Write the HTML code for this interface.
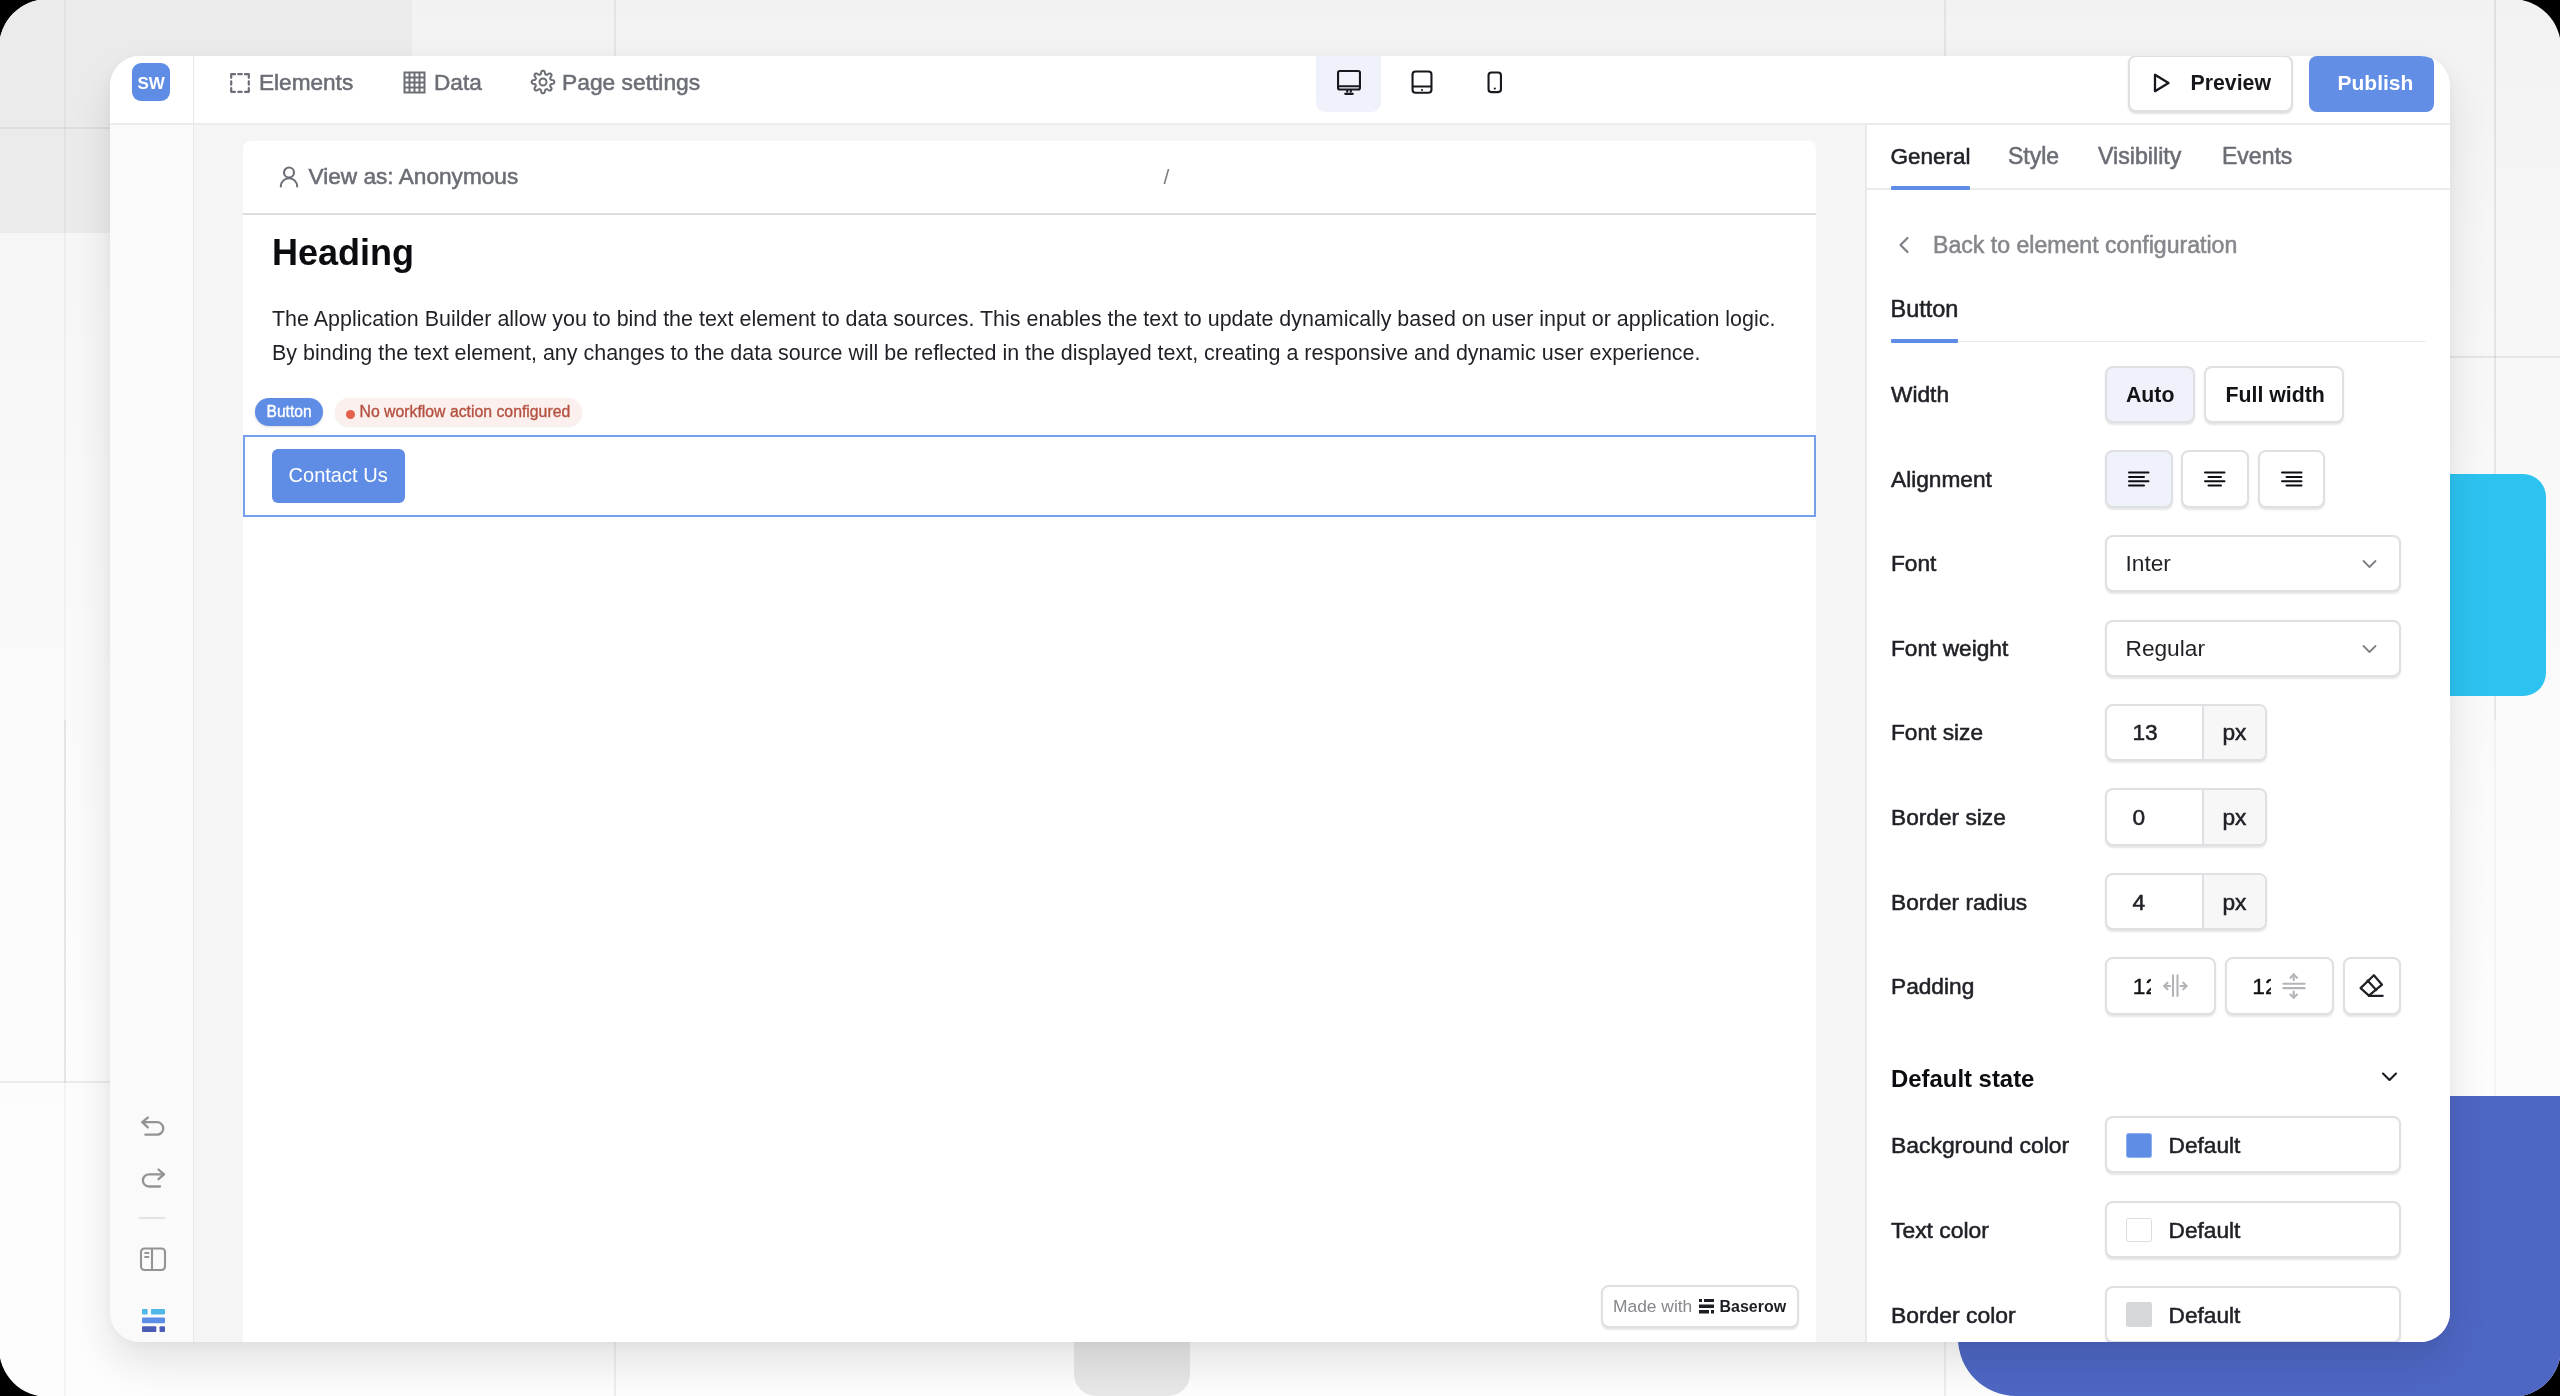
<!DOCTYPE html>
<html><head><meta charset="utf-8">
<style>
*{box-sizing:border-box;margin:0;padding:0}
html,body{width:2560px;height:1396px;overflow:hidden;background:#000}
body{font-family:"Liberation Sans",sans-serif;position:relative}
.a{position:absolute}
.t{position:absolute;white-space:nowrap;line-height:1;transform:translateZ(0)}
#frame{position:absolute;left:-1px;top:-1px;width:2562px;height:1398px;border-radius:49px;overflow:hidden;background:linear-gradient(180deg,#f2f2f2 0px,#f6f6f6 240px,#f9f9f9 530px,#fcfcfc 1000px,#fdfdfd 1396px)}
#inner{position:absolute;left:1px;top:1px;width:2560px;height:1396px}
#win{position:absolute;left:110px;top:56px;width:2340px;height:1286px;border-radius:30px;overflow:hidden;background:#fff;box-shadow:0 20px 40px rgba(0,0,0,0.11),0 2px 8px rgba(0,0,0,0.03)}
</style></head><body>
<div id="frame"><div id="inner">
<div class="a" style="left:0.00px;top:0.00px;width:412.00px;height:233.00px;background:#ebebeb"></div>
<div class="a" style="left:64.00px;top:0.00px;width:2.00px;height:1396.00px;background:rgba(0,0,0,0.035)"></div>
<div class="a" style="left:64.00px;top:720.00px;width:2.00px;height:362.00px;background:rgba(0,0,0,0.05)"></div>
<div class="a" style="left:614.00px;top:0.00px;width:2.00px;height:1396.00px;background:rgba(0,0,0,0.06)"></div>
<div class="a" style="left:1944.00px;top:0.00px;width:2.00px;height:1396.00px;background:rgba(0,0,0,0.06)"></div>
<div class="a" style="left:2494.00px;top:0.00px;width:2.00px;height:720.00px;background:rgba(0,0,0,0.07)"></div>
<div class="a" style="left:2494.00px;top:720.00px;width:2.00px;height:676.00px;background:rgba(0,0,0,0.03)"></div>
<div class="a" style="left:0.00px;top:127.00px;width:120.00px;height:2.00px;background:rgba(0,0,0,0.06)"></div>
<div class="a" style="left:0.00px;top:1081.00px;width:120.00px;height:2.00px;background:rgba(0,0,0,0.07)"></div>
<div class="a" style="left:2440.00px;top:356.00px;width:120.00px;height:2.00px;background:rgba(0,0,0,0.07)"></div>
<div class="a" style="left:2300.00px;top:474.00px;width:246.00px;height:222.00px;border-radius:0 23px 23px 0;background:#2dc3f1"></div>
<div class="a" style="left:1958.00px;top:1096.00px;width:702.00px;height:300.00px;border-radius:0 0 0 58px;background:#4e67c4"></div>
<div class="a" style="left:1074.00px;top:1200.00px;width:116.00px;height:196.00px;border-radius:0 0 22px 22px;background:#e7e7e7"></div>
<div id="win">
<div class="a" style="left:0.00px;top:0.00px;width:2340.00px;height:67.00px;background:#fff"></div>
<div class="a" style="left:0.00px;top:67.00px;width:2340.00px;height:2.00px;background:#ececec"></div>
<div class="a" style="left:83.00px;top:0.00px;width:1.00px;height:1286.00px;background:#e8e8e8"></div>
<div class="a" style="left:0.00px;top:69.00px;width:83.00px;height:1217.00px;background:#fafafa"></div>
<div class="a" style="left:84.00px;top:69.00px;width:1671.00px;height:1217.00px;background:#f5f5f5"></div>
<div class="a" style="left:1755.00px;top:69.00px;width:2.00px;height:1217.00px;background:#e9e9e9"></div>
<div class="a" style="left:1757.00px;top:69.00px;width:583.00px;height:1217.00px;background:#fff"></div>
<div class="a" style="left:22.00px;top:7.00px;width:38.00px;height:38.00px;border-radius:9px;background:#5f8de5"></div>
<div class="t" style="left:27.50px;top:19.30px;font-size:17px;color:#fff;font-weight:700;">SW</div>
<svg class="a" style="left:119.00px;top:16.00px;" width="22" height="22" viewBox="0 0 22 22" fill="none"><g stroke="#6b6e75" stroke-width="2.2" stroke-linecap="round" stroke-linejoin="round"><path d="M2.2 5.8V2.2h3.8M9.3 2.2h3.4M16 2.2h3.8v3.6M19.8 9.3v3.4M19.8 16.2v3.6H16M12.7 19.8H9.3M6 19.8H2.2v-3.6M2.2 12.7V9.3"/></g></svg>
<div class="t" style="left:149.00px;top:15.50px;font-size:22.6px;color:#6b6e75;font-weight:400;-webkit-text-stroke:0.55px #6b6e75;">Elements</div>
<svg class="a" style="left:293.00px;top:15.00px;" width="23" height="23" viewBox="0 0 23 23" fill="none"><g stroke="#6b6e75" stroke-width="2"><rect x="1.5" y="1.5" width="20" height="20"/><path d="M6.5 1.5v20M11.5 1.5v20M16.5 1.5v20M1.5 6.5h20M1.5 11.5h20M1.5 16.5h20"/></g></svg>
<div class="t" style="left:324.00px;top:15.50px;font-size:22.6px;color:#6b6e75;font-weight:400;-webkit-text-stroke:0.55px #6b6e75;">Data</div>
<svg class="a" style="left:420.30px;top:13.40px;" width="26" height="26" viewBox="0 0 26 26" fill="none"><g stroke="#6b6e75" stroke-width="2" stroke-linejoin="round"><path d="M13.00 1.65 L13.37 1.69 L13.73 1.81 L14.08 2.01 L14.41 2.30 L14.70 2.71 L14.87 3.58 L14.99 4.46 L15.18 4.88 L15.37 5.20 L15.57 5.44 L15.78 5.62 L16.00 5.75 L16.25 5.82 L16.53 5.84 L16.84 5.81 L17.20 5.72 L17.63 5.55 L18.33 5.02 L19.08 4.52 L19.57 4.44 L20.01 4.46 L20.40 4.57 L20.74 4.74 L21.03 4.97 L21.26 5.26 L21.43 5.60 L21.54 5.99 L21.56 6.43 L21.48 6.92 L20.98 7.67 L20.45 8.37 L20.28 8.80 L20.19 9.16 L20.16 9.47 L20.18 9.75 L20.25 10.00 L20.38 10.22 L20.56 10.43 L20.80 10.63 L21.12 10.82 L21.54 11.01 L22.42 11.13 L23.29 11.30 L23.70 11.59 L23.99 11.92 L24.19 12.27 L24.31 12.63 L24.35 13.00 L24.31 13.37 L24.19 13.73 L23.99 14.08 L23.70 14.41 L23.29 14.70 L22.42 14.87 L21.54 14.99 L21.12 15.18 L20.80 15.37 L20.56 15.57 L20.38 15.78 L20.25 16.00 L20.18 16.25 L20.16 16.53 L20.19 16.84 L20.28 17.20 L20.45 17.63 L20.98 18.33 L21.48 19.08 L21.56 19.57 L21.54 20.01 L21.43 20.40 L21.26 20.74 L21.03 21.03 L20.74 21.26 L20.40 21.43 L20.01 21.54 L19.57 21.56 L19.08 21.48 L18.33 20.98 L17.63 20.45 L17.20 20.28 L16.84 20.19 L16.53 20.16 L16.25 20.18 L16.00 20.25 L15.78 20.38 L15.57 20.56 L15.37 20.80 L15.18 21.12 L14.99 21.54 L14.87 22.42 L14.70 23.29 L14.41 23.70 L14.08 23.99 L13.73 24.19 L13.37 24.31 L13.00 24.35 L12.63 24.31 L12.27 24.19 L11.92 23.99 L11.59 23.70 L11.30 23.29 L11.13 22.42 L11.01 21.54 L10.82 21.12 L10.63 20.80 L10.43 20.56 L10.22 20.38 L10.00 20.25 L9.75 20.18 L9.47 20.16 L9.16 20.19 L8.80 20.28 L8.37 20.45 L7.67 20.98 L6.92 21.48 L6.43 21.56 L5.99 21.54 L5.60 21.43 L5.26 21.26 L4.97 21.03 L4.74 20.74 L4.57 20.40 L4.46 20.01 L4.44 19.57 L4.52 19.08 L5.02 18.33 L5.55 17.63 L5.72 17.20 L5.81 16.84 L5.84 16.53 L5.82 16.25 L5.75 16.00 L5.62 15.78 L5.44 15.57 L5.20 15.37 L4.88 15.18 L4.46 14.99 L3.58 14.87 L2.71 14.70 L2.30 14.41 L2.01 14.08 L1.81 13.73 L1.69 13.37 L1.65 13.00 L1.69 12.63 L1.81 12.27 L2.01 11.92 L2.30 11.59 L2.71 11.30 L3.58 11.13 L4.46 11.01 L4.88 10.82 L5.20 10.63 L5.44 10.43 L5.62 10.22 L5.75 10.00 L5.82 9.75 L5.84 9.47 L5.81 9.16 L5.72 8.80 L5.55 8.37 L5.02 7.67 L4.52 6.92 L4.44 6.43 L4.46 5.99 L4.57 5.60 L4.74 5.26 L4.97 4.97 L5.26 4.74 L5.60 4.57 L5.99 4.46 L6.43 4.44 L6.92 4.52 L7.67 5.02 L8.37 5.55 L8.80 5.72 L9.16 5.81 L9.47 5.84 L9.75 5.82 L10.00 5.75 L10.22 5.62 L10.43 5.44 L10.63 5.20 L10.82 4.88 L11.01 4.46 L11.13 3.58 L11.30 2.71 L11.59 2.30 L11.92 2.01 L12.27 1.81 L12.63 1.69Z"/><circle cx="13" cy="13" r="3.5"/></g></svg>
<div class="t" style="left:452.00px;top:14.90px;font-size:22.8px;color:#6b6e75;font-weight:400;-webkit-text-stroke:0.55px #6b6e75;">Page settings</div>
<div class="a" style="left:1206.00px;top:-8.00px;width:65.00px;height:64.00px;border-radius:9px;background:#eff2fa"></div>
<svg class="a" style="left:1227.00px;top:14.00px;" width="24" height="26" viewBox="0 0 24 26" fill="none"><g stroke="#16181d" stroke-width="2.1" stroke-linejoin="round"><rect x="1.05" y="1.05" width="21.9" height="18.4" rx="1.8"/><path d="M1.5 16.2h21"/><path d="M10.2 19.5v3M13.8 19.5v3"/><path d="M8.3 23.8h7.4" stroke-width="2.3" stroke-linecap="round"/></g></svg>
<svg class="a" style="left:1301.00px;top:14.00px;" width="22" height="25" viewBox="0 0 22 25" fill="none"><g stroke="#16181d" stroke-width="2.1"><rect x="1.55" y="1.55" width="18.9" height="21.2" rx="3"/><path d="M1.6 16.5h18.8"/></g><circle cx="11" cy="20" r="1.05" fill="#16181d"/></svg>
<svg class="a" style="left:1377.00px;top:15.00px;" width="16" height="23" viewBox="0 0 16 23" fill="none"><g stroke="#16181d" stroke-width="2.1"><rect x="1.55" y="1.55" width="12.4" height="19.6" rx="2.8"/></g><circle cx="7.8" cy="17.6" r="1.05" fill="#16181d"/></svg>
<div class="a" style="left:2018.00px;top:-1.00px;width:165.00px;height:57.00px;border-radius:8px;background:#fff;border:2px solid #dfe0e3;box-shadow:0 1.5px 2px rgba(0,0,0,0.12)"></div>
<svg class="a" style="left:2041.00px;top:16.00px;" width="22" height="22" viewBox="0 0 22 22" fill="none"><path d="M4 2.8v16.4L17.5 11z" stroke="#16181d" stroke-width="2.3" stroke-linejoin="round"/></svg>
<div class="t" style="left:2080.50px;top:16.65px;font-size:21.3px;color:#16181d;font-weight:700;">Preview</div>
<div class="a" style="left:2199.00px;top:0.00px;width:125.00px;height:56.00px;border-radius:8px;background:#628ee5"></div>
<div class="t" style="left:2227.50px;top:16.30px;font-size:21px;color:#fff;font-weight:700;">Publish</div>
<div class="a" style="left:133.00px;top:85.00px;width:1573.00px;height:1259.00px;background:#fff;border-radius:7px 7px 0 0"></div>
<div class="a" style="left:133.00px;top:156.50px;width:1573.00px;height:2.00px;background:#dcdddf"></div>
<svg class="a" style="left:169.00px;top:110.00px;" width="20" height="22" viewBox="0 0 20 22" fill="none"><g stroke="#6b6e75" stroke-width="2.1" stroke-linecap="round"><circle cx="10" cy="6.5" r="5"/><path d="M1.8 20.5c0-4.6 3.7-8.3 8.2-8.3s8.2 3.7 8.2 8.3"/></g></svg>
<div class="t" style="left:198.50px;top:109.48px;font-size:22.65px;color:#6b6e75;font-weight:400;-webkit-text-stroke:0.55px #6b6e75;">View as: Anonymous</div>
<div class="t" style="left:1053.50px;top:110.30px;font-size:21px;color:#7a7c80;font-weight:400;">/</div>
<div class="t" style="left:162.00px;top:178.80px;font-size:36.0px;color:#0b0c10;font-weight:700;">Heading</div>
<div class="t" style="left:162.00px;top:252.57px;font-size:21.46px;color:#1f2127;font-weight:400;">The Application Builder allow you to bind the text element to data sources. This enables the text to update dynamically based on user input or application logic.</div>
<div class="t" style="left:162.00px;top:286.56px;font-size:21.47px;color:#1f2127;font-weight:400;">By binding the text element, any changes to the data source will be reflected in the displayed text, creating a responsive and dynamic user experience.</div>
<div class="a" style="left:145.00px;top:342.00px;width:68.00px;height:28.00px;border-radius:14px;background:#5f8de5;box-shadow:0 1px 3px rgba(0,0,0,0.15)"></div>
<div class="t" style="left:156.50px;top:348.00px;font-size:15.6px;color:#fff;font-weight:400;-webkit-text-stroke:0.35px #fff;">Button</div>
<div class="a" style="left:225.00px;top:342.00px;width:246.50px;height:28.00px;border-radius:14px;background:#fcf0ee;box-shadow:0 1px 2px rgba(0,0,0,0.08)"></div>
<div class="a" style="left:236.00px;top:353.50px;width:9.00px;height:9.00px;border-radius:50%;background:#e5604b"></div>
<div class="t" style="left:249.50px;top:347.90px;font-size:15.8px;color:#b3503f;font-weight:400;-webkit-text-stroke:0.35px #b3503f;">No workflow action configured</div>
<div class="a" style="left:133.00px;top:379.00px;width:1573.00px;height:82.00px;border:2px solid #779ee9"></div>
<div class="a" style="left:162.00px;top:393.00px;width:133.00px;height:53.50px;border-radius:6px;background:#5f8de5"></div>
<div class="t" style="left:178.50px;top:409.27px;font-size:20.06px;color:#fff;font-weight:400;">Contact Us</div>
<div class="a" style="left:1491.00px;top:1229.00px;width:198.00px;height:43.00px;border-radius:8px;border:2px solid #dfe0e3;background:#fff;box-shadow:0 1.5px 2px rgba(0,0,0,0.10)"></div>
<div class="t" style="left:1503.00px;top:1241.60px;font-size:17.4px;color:#85878b;font-weight:400;">Made with</div>
<svg class="a" style="left:1589.00px;top:1243.00px;" width="15" height="15" viewBox="0 0 15 15" fill="none"><g fill="#1d1f25"><rect x="0" y="0" width="3" height="3"/><rect x="5" y="0" width="10" height="3"/><rect x="0" y="5.5" width="15" height="3.5"/><rect x="0" y="11" width="10" height="3.5"/><rect x="12" y="11" width="3" height="3.5"/></g></svg>
<div class="t" style="left:1609.50px;top:1242.81px;font-size:15.98px;color:#1d1f25;font-weight:700;">Baserow</div>
<svg class="a" style="left:30.00px;top:1058.00px;" width="26" height="24" viewBox="0 0 26 24" fill="none"><g stroke="#939394" stroke-width="2.3" stroke-linecap="round" stroke-linejoin="round" fill="none"><path d="M7.8 3.6L2.3 8.2l5.5 5.2"/><path d="M2.6 8.2H17a6.25 6.25 0 0 1 0 12.5H5.4"/></g></svg>
<svg class="a" style="left:30.00px;top:1110.00px;" width="26" height="24" viewBox="0 0 26 24" fill="none"><g stroke="#939394" stroke-width="2.3" stroke-linecap="round" stroke-linejoin="round" fill="none"><path d="M18.5 3.5L24 8.3l-5.5 4.9"/><path d="M23.7 8.3H9a6.1 6.1 0 0 0 0 12.2H20"/></g></svg>
<div class="a" style="left:28.50px;top:1161.00px;width:26.00px;height:1.50px;background:#e3e3e3"></div>
<svg class="a" style="left:29.00px;top:1191.00px;" width="28" height="25" viewBox="0 0 28 25" fill="none"><g stroke="#939394" stroke-width="2.1" fill="none"><rect x="2" y="1.5" width="24" height="21.5" rx="3.5"/><path d="M13 1.5v21.5"/><path d="M6.2 6h3.2M6.2 10h3.2" stroke-linecap="round"/></g></svg>
<svg class="a" style="left:31.50px;top:1253.00px;" width="23" height="23" viewBox="0 0 23 23" fill="none"><rect x="0" y="0" width="5.6" height="5.6" rx="1" fill="#4fb8e8"/><rect x="9" y="0" width="14" height="5.6" rx="1" fill="#4fb8e8"/><rect x="0" y="8.6" width="23" height="5.6" rx="1" fill="#5b8ee6"/><rect x="0" y="17.2" width="14.3" height="5.8" rx="1" fill="#4a5cb5"/><rect x="17.5" y="17.2" width="5.5" height="5.8" rx="1" fill="#4a5cb5"/></svg>
<div class="t" style="left:1780.50px;top:89.57px;font-size:22.46px;color:#1f2127;font-weight:400;-webkit-text-stroke:0.55px #1f2127;">General</div>
<div class="t" style="left:1898.00px;top:88.80px;font-size:23.0px;color:#6b6e75;font-weight:400;-webkit-text-stroke:0.55px #6b6e75;">Style</div>
<div class="t" style="left:1988.00px;top:88.70px;font-size:23.2px;color:#6b6e75;font-weight:400;-webkit-text-stroke:0.55px #6b6e75;">Visibility</div>
<div class="t" style="left:2112.00px;top:88.80px;font-size:23.0px;color:#6b6e75;font-weight:400;-webkit-text-stroke:0.55px #6b6e75;">Events</div>
<div class="a" style="left:1757.00px;top:132.00px;width:583.00px;height:1.50px;background:#ebebeb"></div>
<div class="a" style="left:1781.00px;top:130.20px;width:79.00px;height:3.60px;background:#5f8de5;border-radius:1px"></div>
<svg class="a" style="left:1786.00px;top:180.00px;" width="16" height="18" viewBox="0 0 16 18" fill="none"><path d="M11.5 2L4.5 9l7 7" stroke="#7e8085" stroke-width="2.2" stroke-linecap="round" stroke-linejoin="round"/></svg>
<div class="t" style="left:1823.00px;top:177.75px;font-size:23.1px;color:#85878c;font-weight:400;-webkit-text-stroke:0.55px #85878c;">Back to element configuration</div>
<div class="t" style="left:1780.50px;top:241.55px;font-size:23.5px;color:#1f2127;font-weight:400;-webkit-text-stroke:0.55px #1f2127;">Button</div>
<div class="a" style="left:1781.00px;top:284.50px;width:535.00px;height:1.50px;background:#ebebeb"></div>
<div class="a" style="left:1781.00px;top:283.00px;width:67.00px;height:3.50px;background:#5f8de5;border-radius:1px"></div>
<div class="t" style="left:1781.00px;top:326.95px;font-size:22.7px;color:#1f2127;font-weight:400;-webkit-text-stroke:0.55px #1f2127;">Width</div>
<div class="t" style="left:1781.00px;top:411.95px;font-size:22.7px;color:#1f2127;font-weight:400;-webkit-text-stroke:0.55px #1f2127;">Alignment</div>
<div class="t" style="left:1781.00px;top:495.95px;font-size:22.7px;color:#1f2127;font-weight:400;-webkit-text-stroke:0.55px #1f2127;">Font</div>
<div class="t" style="left:1781.00px;top:580.95px;font-size:22.7px;color:#1f2127;font-weight:400;-webkit-text-stroke:0.55px #1f2127;">Font weight</div>
<div class="t" style="left:1781.00px;top:664.95px;font-size:22.7px;color:#1f2127;font-weight:400;-webkit-text-stroke:0.55px #1f2127;">Font size</div>
<div class="t" style="left:1781.00px;top:749.95px;font-size:22.7px;color:#1f2127;font-weight:400;-webkit-text-stroke:0.55px #1f2127;">Border size</div>
<div class="t" style="left:1781.00px;top:834.95px;font-size:22.7px;color:#1f2127;font-weight:400;-webkit-text-stroke:0.55px #1f2127;">Border radius</div>
<div class="t" style="left:1781.00px;top:918.95px;font-size:22.7px;color:#1f2127;font-weight:400;-webkit-text-stroke:0.55px #1f2127;">Padding</div>
<div class="a" style="left:1995.00px;top:310.00px;width:90.00px;height:57.00px;border-radius:8px;border:2px solid #dfe0e3;box-shadow:0 1.5px 2px rgba(0,0,0,0.10);background:#eff2fa"></div>
<div class="t" style="left:2016.00px;top:328.68px;font-size:21.25px;color:#111317;font-weight:700;">Auto</div>
<div class="a" style="left:2094.00px;top:310.00px;width:140.00px;height:57.00px;border-radius:8px;border:2px solid #dfe0e3;box-shadow:0 1.5px 2px rgba(0,0,0,0.10);background:#fff"></div>
<div class="t" style="left:2115.50px;top:328.65px;font-size:21.3px;color:#111317;font-weight:700;">Full width</div>
<div class="a" style="left:1995.00px;top:394.00px;width:68.00px;height:58.00px;border-radius:8px;border:2px solid #dfe0e3;box-shadow:0 1.5px 2px rgba(0,0,0,0.10);background:#eff2fa"></div>
<div class="a" style="left:2071.00px;top:394.00px;width:68.00px;height:58.00px;border-radius:8px;border:2px solid #dfe0e3;box-shadow:0 1.5px 2px rgba(0,0,0,0.10);background:#fff"></div>
<div class="a" style="left:2148.00px;top:394.00px;width:67.00px;height:58.00px;border-radius:8px;border:2px solid #dfe0e3;box-shadow:0 1.5px 2px rgba(0,0,0,0.10);background:#fff"></div>
<svg class="a" style="left:2018.00px;top:412.00px;" width="22" height="22" viewBox="0 0 22 22" fill="none"><rect x="0.00" y="3.50" width="21.5" height="2" rx="1" fill="#0d0f14"/><rect x="0.00" y="7.90" width="17" height="2" rx="1" fill="#0d0f14"/><rect x="0.00" y="12.20" width="21.5" height="2" rx="1" fill="#0d0f14"/><rect x="0.00" y="16.60" width="17" height="2" rx="1" fill="#0d0f14"/></svg>
<svg class="a" style="left:2094.40px;top:412.00px;" width="22" height="22" viewBox="0 0 22 22" fill="none"><rect x="0.00" y="3.50" width="21.5" height="2" rx="1" fill="#0d0f14"/><rect x="3.50" y="7.90" width="14.5" height="2" rx="1" fill="#0d0f14"/><rect x="0.00" y="12.20" width="21.5" height="2" rx="1" fill="#0d0f14"/><rect x="3.50" y="16.60" width="14.5" height="2" rx="1" fill="#0d0f14"/></svg>
<svg class="a" style="left:2170.80px;top:412.00px;" width="22" height="22" viewBox="0 0 22 22" fill="none"><rect x="0.00" y="3.50" width="21.5" height="2" rx="1" fill="#0d0f14"/><rect x="4.50" y="7.90" width="17" height="2" rx="1" fill="#0d0f14"/><rect x="0.00" y="12.20" width="21.5" height="2" rx="1" fill="#0d0f14"/><rect x="4.50" y="16.60" width="17" height="2" rx="1" fill="#0d0f14"/></svg>
<div class="a" style="left:1995.00px;top:479.00px;width:296.00px;height:57.00px;border-radius:8px;border:2px solid #dfe0e3;box-shadow:0 1.5px 2px rgba(0,0,0,0.10);background:#fff"></div>
<div class="t" style="left:2015.50px;top:495.95px;font-size:22.7px;color:#1f2127;font-weight:400;">Inter</div>
<svg class="a" style="left:2252.00px;top:502.50px;" width="15" height="10" viewBox="0 0 15 10" fill="none"><path d="M1.5 2l6 6 6-6" stroke="#7e8085" stroke-width="1.8" stroke-linecap="round" stroke-linejoin="round"/></svg>
<div class="a" style="left:1995.00px;top:564.00px;width:296.00px;height:57.00px;border-radius:8px;border:2px solid #dfe0e3;box-shadow:0 1.5px 2px rgba(0,0,0,0.10);background:#fff"></div>
<div class="t" style="left:2015.50px;top:580.95px;font-size:22.7px;color:#1f2127;font-weight:400;">Regular</div>
<svg class="a" style="left:2252.00px;top:587.50px;" width="15" height="10" viewBox="0 0 15 10" fill="none"><path d="M1.5 2l6 6 6-6" stroke="#7e8085" stroke-width="1.8" stroke-linecap="round" stroke-linejoin="round"/></svg>
<div class="a" style="left:1995.00px;top:648.00px;width:162.00px;height:57.00px;border-radius:8px;border:2px solid #dfe0e3;box-shadow:0 1.5px 2px rgba(0,0,0,0.10);background:#fff;overflow:hidden"><div class="a" style="left:95px;top:0;width:70px;height:100%;background:#f7f7f7;border-left:2px solid #dfe0e3"></div></div>
<div class="t" style="left:2022.50px;top:664.95px;font-size:22.7px;color:#1f2127;font-weight:400;-webkit-text-stroke:0.55px #1f2127;">13</div>
<div class="t" style="left:2112.50px;top:664.95px;font-size:22.7px;color:#1f2127;font-weight:400;-webkit-text-stroke:0.55px #1f2127;">px</div>
<div class="a" style="left:1995.00px;top:732.00px;width:162.00px;height:58.00px;border-radius:8px;border:2px solid #dfe0e3;box-shadow:0 1.5px 2px rgba(0,0,0,0.10);background:#fff;overflow:hidden"><div class="a" style="left:95px;top:0;width:70px;height:100%;background:#f7f7f7;border-left:2px solid #dfe0e3"></div></div>
<div class="t" style="left:2022.50px;top:749.95px;font-size:22.7px;color:#1f2127;font-weight:400;-webkit-text-stroke:0.55px #1f2127;">0</div>
<div class="t" style="left:2112.50px;top:749.95px;font-size:22.7px;color:#1f2127;font-weight:400;-webkit-text-stroke:0.55px #1f2127;">px</div>
<div class="a" style="left:1995.00px;top:817.00px;width:162.00px;height:57.00px;border-radius:8px;border:2px solid #dfe0e3;box-shadow:0 1.5px 2px rgba(0,0,0,0.10);background:#fff;overflow:hidden"><div class="a" style="left:95px;top:0;width:70px;height:100%;background:#f7f7f7;border-left:2px solid #dfe0e3"></div></div>
<div class="t" style="left:2022.50px;top:834.95px;font-size:22.7px;color:#1f2127;font-weight:400;-webkit-text-stroke:0.55px #1f2127;">4</div>
<div class="t" style="left:2112.50px;top:834.95px;font-size:22.7px;color:#1f2127;font-weight:400;-webkit-text-stroke:0.55px #1f2127;">px</div>
<div class="a" style="left:1995.00px;top:901.00px;width:111.00px;height:58.00px;border-radius:8px;border:2px solid #dfe0e3;box-shadow:0 1.5px 2px rgba(0,0,0,0.10);background:#fff"></div>
<div class="a" style="left:2115.00px;top:901.00px;width:109.00px;height:58.00px;border-radius:8px;border:2px solid #dfe0e3;box-shadow:0 1.5px 2px rgba(0,0,0,0.10);background:#fff"></div>
<div class="a" style="left:2233.00px;top:901.00px;width:58.00px;height:58.00px;border-radius:8px;border:2px solid #dfe0e3;box-shadow:0 1.5px 2px rgba(0,0,0,0.10);background:#fff"></div>
<div class="t" style="left:2022.80px;top:918.95px;width:18.6px;overflow:hidden;font-size:22.7px;color:#111317;-webkit-text-stroke:0.4px #111317">12</div>
<div class="t" style="left:2142.30px;top:918.95px;width:18.6px;overflow:hidden;font-size:22.7px;color:#111317;-webkit-text-stroke:0.4px #111317">12</div>
<svg class="a" style="left:2051.00px;top:917.00px;" width="28" height="26" viewBox="0 0 28 26" fill="none"><g stroke="#b3b4b8" stroke-width="2.1" stroke-linecap="round" stroke-linejoin="round"><path d="M12 2.4v20.6M16.5 2.4v20.6"/><path d="M3.2 13h5.8M19.5 13h6"/><path d="M6.5 9.7L3.2 13l3.3 3.3M22.3 9.7l3.3 3.3-3.3 3.3"/></g></svg>
<svg class="a" style="left:2171.00px;top:916.00px;" width="26" height="28" viewBox="0 0 26 28" fill="none"><g stroke="#b3b4b8" stroke-width="2.1" stroke-linecap="round" stroke-linejoin="round"><path d="M2.4 11.7h21.2M2.4 16.1h21.2"/><path d="M12.7 2.4v5.8M12.7 19.5v6"/><path d="M9.4 5.7l3.3-3.3 3.3 3.3M9.4 22.5l3.3 3.3 3.3-3.3"/></g></svg>
<svg class="a" style="left:2248.00px;top:916.00px;" width="28" height="28" viewBox="0 0 28 28" fill="none"><g stroke="#1d1f25" stroke-width="2.2" stroke-linejoin="round" stroke-linecap="round"><path d="M2.6 16.1L15.9 3.2 24 12.7 10.9 23.6z"/><path d="M9.6 8.6l8.6 9.4"/><path d="M10.9 23.8h13.8"/></g></svg>
<div class="t" style="left:1781.00px;top:1010.85px;font-size:23.9px;color:#0b0c10;font-weight:700;">Default state</div>
<svg class="a" style="left:2271.00px;top:1015.00px;" width="17" height="12" viewBox="0 0 17 12" fill="none"><path d="M2 2.5l6.5 6.5 6.5-6.5" stroke="#16181d" stroke-width="2.1" stroke-linecap="round" stroke-linejoin="round"/></svg>
<div class="t" style="left:1781.00px;top:1077.85px;font-size:22.9px;color:#1f2127;font-weight:400;-webkit-text-stroke:0.55px #1f2127;">Background color</div>
<div class="a" style="left:1995.00px;top:1060.00px;width:296.00px;height:57.00px;border-radius:8px;border:2px solid #dfe0e3;box-shadow:0 1.5px 2px rgba(0,0,0,0.10);background:#fff"></div>
<div class="a" style="left:2016.00px;top:1077.00px;width:26.00px;height:24.50px;border-radius:2.5px;background:#5f8de5;border:1px solid #8fb0ee"></div>
<div class="t" style="left:2058.50px;top:1077.95px;font-size:22.7px;color:#1f2127;font-weight:400;-webkit-text-stroke:0.55px #1f2127;">Default</div>
<div class="t" style="left:1781.00px;top:1162.85px;font-size:22.9px;color:#1f2127;font-weight:400;-webkit-text-stroke:0.55px #1f2127;">Text color</div>
<div class="a" style="left:1995.00px;top:1145.00px;width:296.00px;height:57.00px;border-radius:8px;border:2px solid #dfe0e3;box-shadow:0 1.5px 2px rgba(0,0,0,0.10);background:#fff"></div>
<div class="a" style="left:2016.00px;top:1161.50px;width:26.00px;height:24.50px;border-radius:2.5px;background:#fff;border:1.5px solid #dcdcdd"></div>
<div class="t" style="left:2058.50px;top:1162.95px;font-size:22.7px;color:#1f2127;font-weight:400;-webkit-text-stroke:0.55px #1f2127;">Default</div>
<div class="t" style="left:1781.00px;top:1247.85px;font-size:22.9px;color:#1f2127;font-weight:400;-webkit-text-stroke:0.55px #1f2127;">Border color</div>
<div class="a" style="left:1995.00px;top:1230.00px;width:296.00px;height:57.00px;border-radius:8px;border:2px solid #dfe0e3;box-shadow:0 1.5px 2px rgba(0,0,0,0.10);background:#fff"></div>
<div class="a" style="left:2016.00px;top:1246.00px;width:26.00px;height:24.50px;border-radius:2.5px;background:#d6d7d9"></div>
<div class="t" style="left:2058.50px;top:1247.95px;font-size:22.7px;color:#1f2127;font-weight:400;-webkit-text-stroke:0.55px #1f2127;">Default</div>
</div>
</div></div>
</body></html>
